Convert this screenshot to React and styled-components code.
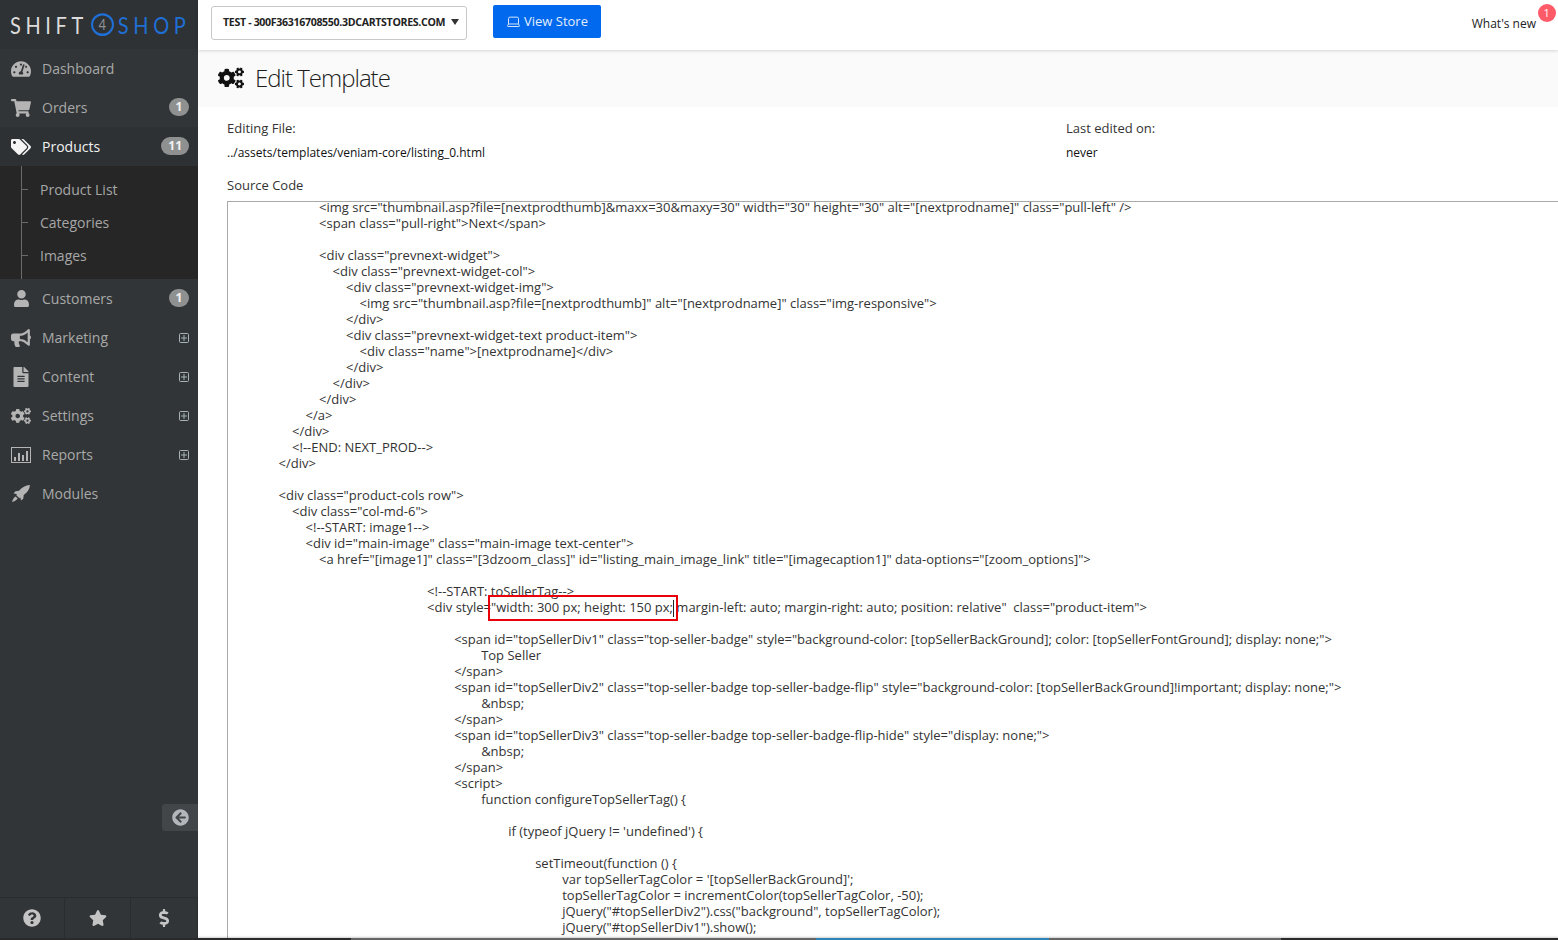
import React from "react";
import styled, { createGlobalStyle } from "styled-components";
import {
  FaTachometerAlt,
  FaShoppingCart,
  FaTags,
  FaUser,
  FaBullhorn,
  FaFileAlt,
  FaCogs,
  FaQuestionCircle,
  FaStar,
  FaDollarSign,
  FaArrowCircleLeft,
} from "react-icons/fa";
import { Laptop } from "lucide-react";

const GlobalStyle = createGlobalStyle`
  html, body {
    margin: 0;
    padding: 0;
    height: 940px;
    overflow: hidden;
    background: #fff;
    font-family: "Open Sans", sans-serif;
  }
`;

const code = `                        <img src="thumbnail.asp?file=[nextprodthumb]&maxx=30&maxy=30" width="30" height="30" alt="[nextprodname]" class="pull-left" />
                        <span class="pull-right">Next</span>

                        <div class="prevnext-widget">
                            <div class="prevnext-widget-col">
                                <div class="prevnext-widget-img">
                                    <img src="thumbnail.asp?file=[nextprodthumb]" alt="[nextprodname]" class="img-responsive">
                                </div>
                                <div class="prevnext-widget-text product-item">
                                    <div class="name">[nextprodname]</div>
                                </div>
                            </div>
                        </div>
                    </a>
                </div>
                <!--END: NEXT_PROD-->
            </div>

            <div class="product-cols row">
                <div class="col-md-6">
                    <!--START: image1-->
                    <div id="main-image" class="main-image text-center">
                        <a href="[image1]" class="[3dzoom_class]" id="listing_main_image_link" title="[imagecaption1]" data-options="[zoom_options]">

                                                        <!--START: toSellerTag-->
                                                        <div style="width: 300 px; height: 150 px; margin-left: auto; margin-right: auto; position: relative"  class="product-item">

                                                                <span id="topSellerDiv1" class="top-seller-badge" style="background-color: [topSellerBackGround]; color: [topSellerFontGround]; display: none;">
                                                                        Top Seller
                                                                </span>
                                                                <span id="topSellerDiv2" class="top-seller-badge top-seller-badge-flip" style="background-color: [topSellerBackGround]!important; display: none;">
                                                                        &nbsp;
                                                                </span>
                                                                <span id="topSellerDiv3" class="top-seller-badge top-seller-badge-flip-hide" style="display: none;">
                                                                        &nbsp;
                                                                </span>
                                                                <script>
                                                                        function configureTopSellerTag() {

                                                                                if (typeof jQuery != 'undefined') {

                                                                                        setTimeout(function () {
                                                                                                var topSellerTagColor = '[topSellerBackGround]';
                                                                                                topSellerTagColor = incrementColor(topSellerTagColor, -50);
                                                                                                jQuery("#topSellerDiv2").css("background", topSellerTagColor);
                                                                                                jQuery("#topSellerDiv1").show();`;

const Page = styled.div`
  display: flex;
  position: relative;
  width: 1558px;
  height: 940px;
  overflow: hidden;
  background: #2a2a2a;
`;

const Sidebar = styled.aside`
  position: relative;
  display: flex;
  flex-direction: column;
  flex: 0 0 198px;
  width: 198px;
  min-width: 0;
  height: 938px;
  background: #313537;
`;

const LogoBar = styled.div`
  display: flex;
  align-items: center;
  flex: 0 0 49px;
  padding: 0 0 1px 10px;
  box-sizing: border-box;
  background: #2e3234;
  overflow: hidden;
`;

const LogoMark = styled.div`
  display: flex;
  align-items: center;
  transform: scaleY(1.2);
  font-family: Lato, sans-serif;
  font-weight: 400;
  font-size: 20px;
  letter-spacing: 4.6px;
  color: #dcdcdc;
`;

const LogoShop = styled.span`
  color: #1f6fd6;
`;

const LogoFour = styled.span`
  display: inline-flex;
  align-items: center;
  justify-content: center;
  width: 23px;
  height: 19px;
  box-sizing: border-box;
  margin: 0 4px 0 3px;
  border: 2px solid #1f6fd6;
  border-radius: 50%;
  font-size: 13px;
  letter-spacing: 0;
  color: #8c9094;
`;

const Nav = styled.nav`
  display: flex;
  flex-direction: column;
  flex: 1;
`;

const NavItem = styled.div`
  display: flex;
  align-items: center;
  flex: 0 0 39px;
  padding: 0 9px 0 10px;
  background: ${(p) => (p.$active ? "#2d3133" : "transparent")};
  color: ${(p) => (p.$active ? "#f1f1f1" : "#a9a9a9")};
  font-size: 14px;
`;

const NavIcon = styled.span`
  display: flex;
  align-items: center;
  justify-content: center;
  flex: 0 0 22px;
  margin-right: 10px;
  font-size: ${(p) => p.$size || 20}px;
  color: ${(p) => (p.$active ? "#f4f4f4" : "#b4b4b4")};
`;

const NavLabel = styled.span`
  flex: 1;
`;

const Badge = styled.span`
  display: flex;
  align-items: center;
  justify-content: center;
  min-width: 10px;
  height: 18px;
  margin-bottom: 2px;
  padding: 0 ${(p) => (p.$wide ? 7 : 5)}px;
  border-radius: 9px;
  background: #8f9191;
  color: #f2f2f2;
  font-size: 12px;
  font-weight: 700;
`;

const Expand = styled.span`
  display: flex;
  color: #a9b4b6;
`;

const SubMenu = styled.div`
  position: relative;
  display: flex;
  flex-direction: column;
  flex: 0 0 113px;
  padding: 7px 0 6px 40px;
  box-sizing: border-box;
  background: #262626;

  &::before {
    content: "";
    position: absolute;
    left: 21px;
    top: 0;
    bottom: 0;
    width: 1px;
    background: #6a6a6a;
  }
`;

const SubItem = styled.div`
  position: relative;
  height: 33px;
  line-height: 33px;
  color: #a6a6a6;
  font-size: 14px;

  &::before {
    content: "";
    position: absolute;
    left: -19px;
    top: 16px;
    width: 7px;
    height: 1px;
    background: #6a6a6a;
  }
`;

const Collapse = styled.div`
  position: absolute;
  right: 0;
  top: 804px;
  display: flex;
  align-items: center;
  justify-content: center;
  width: 36px;
  height: 27px;
  border-radius: 3px 0 0 3px;
  background: #434648;
  color: #b3b6ba;
  font-size: 17px;
`;

const SideFooter = styled.div`
  display: grid;
  grid-template-columns: 65px 66px 67px;
  height: 40px;
  border-top: 1px solid #2a2d2e;
`;

const FootButton = styled.div`
  display: flex;
  align-items: center;
  justify-content: center;
  border-right: 1px solid #2a2d2e;
  color: #c4c4c4;
  font-size: 18px;
`;

const Main = styled.main`
  display: flex;
  flex-direction: column;
  flex: 1;
  min-width: 0;
  height: 938px;
  background: #fff;
`;

const TopBar = styled.header`
  position: relative;
  display: flex;
  align-items: center;
  gap: 26px;
  height: 50px;
  padding: 0 0 7px 13px;
  box-sizing: border-box;
  background: #fff;
  box-shadow: 0 1px 3px rgba(0, 0, 0, 0.15);
  z-index: 1;
`;

const StoreSelect = styled.div`
  display: flex;
  align-items: center;
  justify-content: space-between;
  width: 256px;
  height: 34px;
  padding: 0 7px 2px 11px;
  box-sizing: border-box;
  margin-top: 2px;
  border: 1px solid #c8c8c8;
  border-radius: 3px;
  color: #222;
  font-size: 10.6px;
  font-weight: 700;
  letter-spacing: -0.33px;
  white-space: nowrap;
`;

const Caret = styled.span`
  width: 0;
  height: 0;
  border-left: 4px solid transparent;
  border-right: 4px solid transparent;
  border-top: 6px solid #333;
`;

const ViewStore = styled.div`
  display: flex;
  align-items: center;
  justify-content: center;
  gap: 3px;
  width: 108px;
  height: 33px;
  padding-bottom: 1px;
  box-sizing: border-box;
  border-radius: 2px;
  background: #0069ed;
  color: #e4eefc;
  font-size: 13px;
`;

const WhatsNew = styled.div`
  position: absolute;
  right: 22px;
  top: 15px;
  color: #222;
  font-size: 12px;
`;

const NewCount = styled.span`
  position: absolute;
  left: 66px;
  top: -11px;
  width: 18px;
  height: 18px;
  border-radius: 50%;
  background: #ff5a68;
  color: #fff;
  font-size: 11px;
  line-height: 18px;
  text-align: center;
`;

const TitleBar = styled.div`
  display: flex;
  align-items: center;
  gap: 11px;
  height: 57px;
  padding: 0 0 2px 20px;
  box-sizing: border-box;
  background: #fafafa;
`;

const TitleText = styled.h1`
  margin: 0;
  font-size: 24px;
  font-weight: 300;
  letter-spacing: -1px;
  color: #1d1d1d;
`;

const Content = styled.div`
  display: flex;
  flex-direction: column;
  flex: 1;
  min-height: 0;
  padding: 12px 0 0 29px;
`;

const InfoGrid = styled.div`
  display: grid;
  grid-template-columns: 839px 1fr;
  row-gap: 7px;
  line-height: 18px;
`;

const FieldLabel = styled.div`
  font-size: 13px;
  color: #333;
`;

const FieldValue = styled.div`
  font-size: 12px;
  color: #111;
`;

const SourceLabel = styled.div`
  margin-top: 14px;
  margin-bottom: 7px;
  font-size: 13px;
  line-height: 18px;
  color: #333;
`;

const CodeBox = styled.div`
  flex: 1;
  min-height: 0;
  overflow: hidden;
  border: 1px solid #a9a9a9;
  border-right: none;
  border-bottom: none;
  position: relative;
`;

const CodeText = styled.pre`
  margin: -3px 0 0 0;
  padding: 0 0 0 10px;
  font-family: "Open Sans", sans-serif;
  font-size: 13px;
  line-height: 16px;
  color: #333;
`;

const Highlight = styled.div`
  position: absolute;
  left: 260px;
  top: 393px;
  width: 190px;
  height: 26px;
  box-sizing: border-box;
  border: 2px solid #e8000b;

  /* the text cursor caught in the screenshot */
  &::after {
    content: "";
    position: absolute;
    right: 2px;
    top: 3px;
    width: 1px;
    height: 17px;
    background: #222;
  }
`;

const BottomStrip = styled.div`
  position: absolute;
  left: 198px;
  right: 0;
  bottom: 0;
  height: 2px;
  display: grid;
  grid-template-columns: 153px 465px 233px 232px 1fr;
  box-shadow: 0 -1px 2px rgba(0, 0, 0, 0.2);
`;

const StripPart = styled.div`
  background: ${(p) => p.$color};
`;

const ReportsIcon = () => (
  <svg width="20" height="16" viewBox="0 0 20 16" fill="currentColor">
    <path d="M0 0h20v16H0zM1 1v14h18V1z" fillRule="evenodd" />
    <path d="M3 10h2v4H3zM7 6h2v8H7zM11 8h2v6h-2zM15 4h2v10h-2z" />
  </svg>
);

const RocketIcon = () => (
  <svg width="18" height="17" viewBox="0 0 18 17" fill="currentColor">
    <path d="M18 0C13.5.3 9.8 2.4 7 5.8L3.4 6.2 1.6 8.4l3.2.6-.5 1.3 2.8 2.7 1.3-.5.6 3 2.3-1.8.4-3.6C15.300 7.500 17.600 4.300 18 0z" />
    <path d="M3.500 11.500l2.200 2.100C4.300 15.500 2.300 16.500 0 17c.500-2.200 1.600-4.200 3.500-5.500z" />
  </svg>
);

const PlusBox = () => (
  <svg width="10" height="10" viewBox="0 0 10 10" fill="none" stroke="currentColor">
    <rect x="0.5" y="0.5" width="9" height="9" rx="1" />
    <path d="M2 5h6M5 2v6" />
  </svg>
);

const menuTop = [
  { label: "Dashboard", icon: <FaTachometerAlt /> },
  { label: "Orders", icon: <FaShoppingCart />, badge: "1" },
];

const menuBottom = [
  { label: "Customers", icon: <FaUser />, iconSize: 17, badge: "1" },
  { label: "Marketing", icon: <FaBullhorn />, expand: true },
  { label: "Content", icon: <FaFileAlt />, expand: true },
  { label: "Settings", icon: <FaCogs />, expand: true },
  { label: "Reports", icon: <ReportsIcon />, expand: true },
  { label: "Modules", icon: <RocketIcon /> },
];

function MenuRow({ item }) {
  return (
    <NavItem>
      <NavIcon $size={item.iconSize}>{item.icon}</NavIcon>
      <NavLabel>{item.label}</NavLabel>
      {item.badge && <Badge>{item.badge}</Badge>}
      {item.expand && (
        <Expand>
          <PlusBox />
        </Expand>
      )}
    </NavItem>
  );
}

export default function App() {
  return (
    <Page>
      <GlobalStyle />
      <Sidebar>
        <LogoBar>
          <LogoMark>
            SHIFT
            <LogoFour>4</LogoFour>
            <LogoShop>SHOP</LogoShop>
          </LogoMark>
        </LogoBar>
        <Nav>
          {menuTop.map((item) => (
            <MenuRow key={item.label} item={item} />
          ))}
          <NavItem $active>
            <NavIcon $active>
              <FaTags />
            </NavIcon>
            <NavLabel>Products</NavLabel>
            <Badge $wide>11</Badge>
          </NavItem>
          <SubMenu>
            <SubItem>Product List</SubItem>
            <SubItem>Categories</SubItem>
            <SubItem>Images</SubItem>
          </SubMenu>
          {menuBottom.map((item) => (
            <MenuRow key={item.label} item={item} />
          ))}
        </Nav>
        <Collapse>
          <FaArrowCircleLeft />
        </Collapse>
        <SideFooter>
          <FootButton>
            <FaQuestionCircle />
          </FootButton>
          <FootButton>
            <FaStar />
          </FootButton>
          <FootButton>
            <FaDollarSign />
          </FootButton>
        </SideFooter>
      </Sidebar>
      <Main>
        <TopBar>
          <StoreSelect>
            TEST - 300F36316708550.3DCARTSTORES.COM
            <Caret />
          </StoreSelect>
          <ViewStore>
            <Laptop size={15} strokeWidth={1.5} />
            View Store
          </ViewStore>
          <WhatsNew>
            What's new
            <NewCount>1</NewCount>
          </WhatsNew>
        </TopBar>
        <TitleBar>
          <FaCogs size={26} color="#111" />
          <TitleText>Edit Template</TitleText>
        </TitleBar>
        <Content>
          <InfoGrid>
            <FieldLabel>Editing File:</FieldLabel>
            <FieldLabel>Last edited on:</FieldLabel>
            <FieldValue>../assets/templates/veniam-core/listing_0.html</FieldValue>
            <FieldValue>never</FieldValue>
          </InfoGrid>
          <SourceLabel>Source Code</SourceLabel>
          <CodeBox>
            <CodeText>{code}</CodeText>
            <Highlight />
          </CodeBox>
        </Content>
      </Main>
      <BottomStrip>
        <StripPart $color="#2a2a2a" />
        <StripPart $color="#666" />
        <StripPart $color="#2e86b8" />
        <StripPart $color="#666" />
        <StripPart $color="#2a2a2a" />
      </BottomStrip>
    </Page>
  );
}
